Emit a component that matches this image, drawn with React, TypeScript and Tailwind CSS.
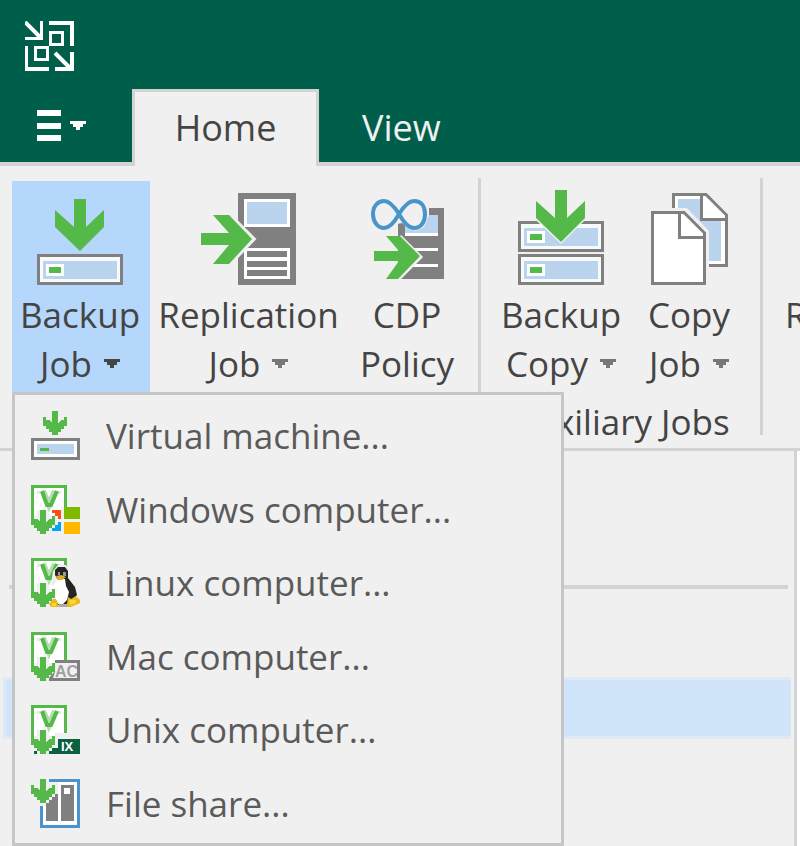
import type { ReactNode } from "react";

const GREEN = "#54b948";
const GRAY = "#808080";
const PALE = "#bbd4ee";
const SURFACE = "#f0f0f0";

function Logo() {
  return (
    <svg width="49" height="50" viewBox="0 0 49 50" aria-label="Logo" role="img" shapeRendering="crispEdges">
      <g fill="#fff">
        <path d="M15 0h3v19H0v-3h15zM24 0h25v25h-4V4H24zM0 25h3v21h21v4H0zM45 31h4v19H30v-4h15z" />
        <path fillRule="evenodd" d="M24 10h15v15H24zM27 13v9h9v-9zM9 25h15v15H9zM12 28v9h9v-9z" />
      </g>
      <path d="M0 1L15 16M30 32L45 47" stroke="#fff" strokeWidth="4" shapeRendering="auto" />
    </svg>
  );
}

function Caret({ color }: { color: string }) {
  return (
    <svg width="16" height="9" viewBox="0 0 16 9" aria-hidden="true" className="shrink-0" shapeRendering="crispEdges">
      <path d="M0 0h16v3h-3v3h-3v3H6V6H3V3H0z" fill={color} />
    </svg>
  );
}

function DiskBox({ y }: { y: number }) {
  return (
    <g transform={`translate(0 ${y})`} shapeRendering="crispEdges">
      <rect width="86" height="31" fill={GRAY} />
      <rect x="3" y="3" width="80" height="25" fill="#f7f9fb" />
      <rect x="6" y="7" width="74" height="18" fill={PALE} />
      <rect x="9" y="10" width="18" height="12" fill="#fff" />
      <rect x="12" y="13" width="12" height="6" fill={GREEN} />
    </g>
  );
}

const BIG_DOWN = "M37 0H49V28L67 11V28L43 52L18 28V11L37 28Z";

function BackupIcon() {
  return (
    <svg width="86" height="86" viewBox="0 0 86 86" aria-hidden="true">
      <DiskBox y={55} />
      <path d={BIG_DOWN} fill={GREEN} />
    </svg>
  );
}

function BackupCopyIcon() {
  return (
    <svg width="86" height="95" viewBox="0 0 86 95" aria-hidden="true">
      <DiskBox y={31} />
      <DiskBox y={64} />
      <path d={BIG_DOWN} fill={SURFACE} stroke={SURFACE} strokeWidth="3" />
      <path d={BIG_DOWN} fill={GREEN} />
    </svg>
  );
}

function ReplicationIcon() {
  return (
    <svg width="95" height="92" viewBox="0 0 95 92" aria-hidden="true">
      <g shapeRendering="crispEdges">
        <path d="M37 0h58v92H37z" fill={GRAY} />
        <path d="M43 6h46v28H43zM43 55h46v31H43z" fill="#fff" />
        <path d="M46 9h40v22H46z" fill={PALE} />
        <path d="M46 58h40v6H46zM46 68h40v6H46zM46 77h40v6H46z" fill={GRAY} />
      </g>
      <path d="M28 22L52 46L28 71" fill="none" stroke={SURFACE} strokeWidth="5" />
      <path d="M0 40H28L12 22H28L51 46L28 71H12L28 52H0Z" fill={GREEN} />
    </svg>
  );
}

function CdpIcon() {
  return (
    <svg width="73" height="80" viewBox="0 0 73 80" aria-hidden="true">
      <g shapeRendering="crispEdges">
        <path d="M27 9h46v71H27z" fill={GRAY} />
        <path d="M34 16h33v18H34z" fill={PALE} />
        <path d="M34 34h33v3H34zM34 49h33v3H34zM34 65h33v3H34z" fill="#fff" />
      </g>
      <path d="M26 2h32v14l-5 12-10 5-12-9-5 1z" fill={SURFACE} />
      <path d="M34 25h4l6 7 10-3 4-8v13H34z" fill={PALE} />
      <path
        d="M28 15C23 7 18 2 13 2C7 2 2 7 2 15S7 29 13 29C18 29 23 24 28 15C33 7 38 2 43 2C50 2 54 7 54 15S50 29 43 29C38 29 33 24 28 15Z"
        fill={SURFACE}
        stroke="#4795c9"
        strokeWidth="4"
      />
      <path d="M29 37L50 58L27 81" fill="none" stroke={SURFACE} strokeWidth="3" />
      <path d="M3 52H28L15 37H29L49 57L27 80H15L28 62H3Z" fill={GREEN} />
    </svg>
  );
}

function CopyIcon() {
  return (
    <svg width="77" height="92" viewBox="0 0 77 92" aria-hidden="true">
      <path d="M22.500 1.500H55L75.500 22V72.500H22.500Z" fill="#fff" stroke={GRAY} strokeWidth="3" />
      <path d="M27 6H49V28H70V68H27Z" fill={PALE} />
      <path d="M50.500 2V26.500H76" fill="none" stroke={GRAY} strokeWidth="3" />
      <path d="M0 15H36L58 38V92H0Z" fill={SURFACE} />
      <path d="M1.500 19.500H33L53.500 40V90.500H1.500Z" fill="#fff" stroke={GRAY} strokeWidth="3" />
      <path d="M28.500 20V44.500H54" fill="none" stroke={GRAY} strokeWidth="3" />
    </svg>
  );
}

function SmallArrow({ x, y }: { x: number; y: number }) {
  const d = "M9 0h6v12l3-3h3V6h3v9h-3v3h-3v3h-3v3H9v-3H6v-3H3v-3H0V6h3v3h3l3 3z";
  return (
    <g transform={`translate(${x} ${y})`}>
      <path d={d} fill={GREEN} shapeRendering="crispEdges" />
    </g>
  );
}

function MenuIcon({ children }: { children: ReactNode }) {
  return (
    <svg width="49" height="49" viewBox="0 0 49 49" aria-hidden="true" className="shrink-0 overflow-hidden">
      {children}
    </svg>
  );
}

function AgentBase() {
  return (
    <>
      <rect x="1.500" y="1.500" width="33" height="37" fill="#fff" stroke={GREEN} strokeWidth="3" shapeRendering="crispEdges" />
      <path d="M3 31h3v-6h12v6h6v-3h12v21H0V31z" fill={SURFACE} shapeRendering="crispEdges" />
      <path d="M6 6h3v3H6zM27 6h3v3h-3z" fill="#dceedb" />
      <path d="M12 6L18 20L24 6" fill="none" stroke="#b5ddb0" strokeWidth="6" />
      <path d="M11 6L16 20H20L26 6" fill="none" stroke={GREEN} strokeWidth="4" />
      <path d="M0 28h3v3H0z" fill={GREEN} />
      <SmallArrow x={0} y={25} />
    </>
  );
}

function VirtualIcon() {
  return (
    <MenuIcon>
      <g shapeRendering="crispEdges">
        <rect x="1.500" y="28.500" width="46" height="19" fill="#fff" stroke={GRAY} strokeWidth="3" />
        <path d="M6 33h37v10H6z" fill={PALE} />
        <path d="M9 37h9v3H9z" fill={GREEN} />
      </g>
      <SmallArrow x={12} y={0} />
    </MenuIcon>
  );
}

function WindowsIcon() {
  return (
    <MenuIcon>
      <AgentBase />
      <g shapeRendering="crispEdges">
        <path d="M30 22h19v27H27v-21h3z" fill={SURFACE} />
        <path d="M21 25h9v9h-3v-3h-3v-3h-3z" fill="#f65314" />
        <path d="M33 22h16v12H33z" fill="#7fba00" />
        <path d="M27 37h3v9h-9v-3h3v-3h3z" fill="#00a4ef" />
        <path d="M33 37h16v12H33z" fill="#ffb900" />
      </g>
    </MenuIcon>
  );
}

function LinuxIcon() {
  return (
    <MenuIcon>
      <AgentBase />
      <path d="M22 13L27 7H35L39 14V20L47 32V42H49V49H18L24 38V31L20 26Z" fill={SURFACE} />
      <path d="M24 17V12L27 9H34L37 13V20L44 29L46 37L41 42L36 47H26L24 38V27L27 22Z" fill="#252525" />
      <path d="M22 28L27 21H34L35 28L38 34L36 42L32 46H27L24 40Z" fill="#fff" />
      <path d="M27 14h2v3h-2zM32 14h3v4h-3z" fill="#999" />
      <path d="M25 18L30 17L35 19L31 22H27Z" fill="#e0ae22" />
      <path d="M18 46L22 41H25L28 49H20ZM36 46L37 39L40 41L45 38L49 42V45L40 49H36Z" fill="#e9b91e" />
      <path d="M21 45h4v3h-4zM38 42h7v3l-6 2z" fill="#f7da30" />
      <path d="M28 46h8v3h-8z" fill="#aaa" />
      <SmallArrow x={0} y={25} />
    </MenuIcon>
  );
}

function MacIcon() {
  return (
    <MenuIcon>
      <AgentBase />
      <path d="M24 28h25v21H18v-3l6-7z" fill={GRAY} />
      <path d="M24 31h22v15H22l2-6z" fill="#f0f0f0" />
      <text x="24" y="45" fontSize="16" fontWeight="700" fill="#a0a0a0" fontFamily="Liberation Sans, sans-serif">AC</text>
      <path d="M46 28h3v21h-3z" fill={GRAY} />
      <SmallArrow x={0} y={25} />
    </MenuIcon>
  );
}

function UnixIcon() {
  return (
    <MenuIcon>
      <AgentBase />
      <path d="M27 34h22v15H18v-3h3v-3h6zM3 46h3v3H3z" fill="#0b6040" shapeRendering="crispEdges" />
      <text x="30" y="46" fontSize="13" fontWeight="700" fill="#fff" fontFamily="Liberation Sans, sans-serif">IX</text>
    </MenuIcon>
  );
}

function FileShareIcon() {
  return (
    <MenuIcon>
      <g shapeRendering="crispEdges">
        <path d="M9 0h40v49H9z" fill="#4b93cd" />
        <path d="M12 3h34v43H12z" fill="#fff" />
        <path d="M15 6h12v36H15zM30 6h13v36H30z" fill={GRAY} />
        <path d="M33 9h6v6h-6z" fill="#fff" />
        <path d="M0 0h18v3h9v12h-3v3h-3v3h-3v3h-3v3H0z" fill={SURFACE} />
      </g>
      <SmallArrow x={0} y={0} />
    </MenuIcon>
  );
}

type RibbonButtonProps = {
  icon: ReactNode;
  lines: [string, string];
  size: string;
  caret?: string;
  open?: boolean;
};

function RibbonButton({ icon, lines, size, caret, open = false }: RibbonButtonProps) {
  return (
    <button
      type="button"
      aria-haspopup={caret ? "menu" : undefined}
      aria-expanded={caret ? open : undefined}
      className={`flex shrink-0 flex-col items-center pr-0.5 pb-1 text-[35px]/[49px] whitespace-nowrap ${size} ${open ? "bg-[#b5d7fb]" : ""}`}
    >
      <span className="mb-[5px] flex h-[104px] items-end">{icon}</span>
      <span>{lines[0]}</span>
      <span className="flex items-center gap-3">
        {lines[1]}
        {caret && <Caret color={caret} />}
      </span>
    </button>
  );
}

const menuItems = [
  { label: "Virtual machine...", icon: <VirtualIcon /> },
  { label: "Windows computer...", icon: <WindowsIcon /> },
  { label: "Linux computer...", icon: <LinuxIcon /> },
  { label: "Mac computer...", icon: <MacIcon /> },
  { label: "Unix computer...", icon: <UnixIcon /> },
  { label: "File share...", icon: <FileShareIcon /> },
];

function JobMenu() {
  return (
    <div
      role="menu"
      className="absolute top-full left-0 z-10 grid h-[454px] w-[552px] grid-rows-6 border-3 border-[#c6c6c6] bg-[#f0f0f0] pt-1 pb-[3px] text-[#5a5a5a]"
    >
      {menuItems.map((item) => (
        <button key={item.label} type="button" role="menuitem" className="flex items-center gap-[26px] px-4 text-left text-[35px]/[49px]">
          {item.icon}
          {item.label}
        </button>
      ))}
    </div>
  );
}

function Divider() {
  return <div className="h-[257px] w-[3px] shrink-0 bg-[#d3d3d3]" />;
}

export default function App() {
  return (
    <div className="flex min-h-screen flex-col overflow-hidden bg-[#f0f0f0] font-['Open_Sans','Noto_Sans',sans-serif] text-[#444444]">
      <header className="bg-[#005f4b]">
        <div className="h-[89px] px-[25px] pt-[21px]">
          <Logo />
        </div>
        <nav className="flex h-[77px] text-4xl/[49px]">
          <button type="button" aria-label="Main menu" className="flex w-[132px] shrink-0 items-center gap-[9px] border-b-4 border-[#d3d3d3] pl-[37px]">
            <svg width="24" height="31" viewBox="0 0 24 31" aria-hidden="true">
              <path d="M0 0h24v6H0zM0 13h24v6H0zM0 25h24v6H0z" fill="#fff" />
            </svg>
            <Caret color="#fff" />
          </button>
          <button type="button" className="w-[187px] shrink-0 border-3 border-b-0 border-[#d3d3d3] bg-[#f0f0f0] pb-1">
            Home
          </button>
          <button type="button" className="flex-1 border-b-4 border-[#d3d3d3] px-[43px] pt-[3px] text-left text-[#f0f0f0]">
            View
          </button>
        </nav>
      </header>

      <section aria-label="Ribbon" className="flex border-b-3 border-[#d3d3d3] pt-3">
        <div className="flex shrink-0 items-start pt-[3px] pr-[11px] pl-3">
          <div className="relative">
            <RibbonButton icon={<BackupIcon />} lines={["Backup", "Job"]} size="w-[138px]" caret="#444444" open />
            <JobMenu />
          </div>
          <RibbonButton icon={<ReplicationIcon />} lines={["Replication", "Job"]} size="w-[199px]" caret="#777777" />
          <RibbonButton icon={<span className="pb-1.5"><CdpIcon /></span>} lines={["CDP", "Policy"]} size="w-[118px]" />
        </div>
        <Divider />
        <div className="shrink-0 pt-[3px] pr-[11px] pb-1 pl-3">
          <div className="flex">
            <RibbonButton icon={<BackupCopyIcon />} lines={["Backup", "Copy"]} size="w-[138px]" caret="#777777" />
            <RibbonButton icon={<CopyIcon />} lines={["Copy", "Job"]} size="w-[118px]" caret="#777777" />
          </div>
          <p className="mt-2 text-center text-[35px]/[44px]">Auxiliary Jobs</p>
        </div>
        <Divider />
        <div className="flex items-start pt-[3px] pl-[10px]">
          <RibbonButton icon={null} lines={["Restore", ""]} size="px-3" />
        </div>
      </section>

      <main className="flex flex-1">
        <aside className="flex-1 border-r-3 border-[#d3d3d3] pr-[3px] pl-[3px]">
          <div className="mx-1.5 mr-[3px] h-[138px] border-b-4 border-[#d3d3d3]" />
          <div className="mt-[88px] h-[62px] border-3 border-r-0 border-[#dfeaf5] bg-[#d0e5fa]" />
        </aside>
        <div className="w-[3px] bg-white" />
      </main>
    </div>
  );
}
